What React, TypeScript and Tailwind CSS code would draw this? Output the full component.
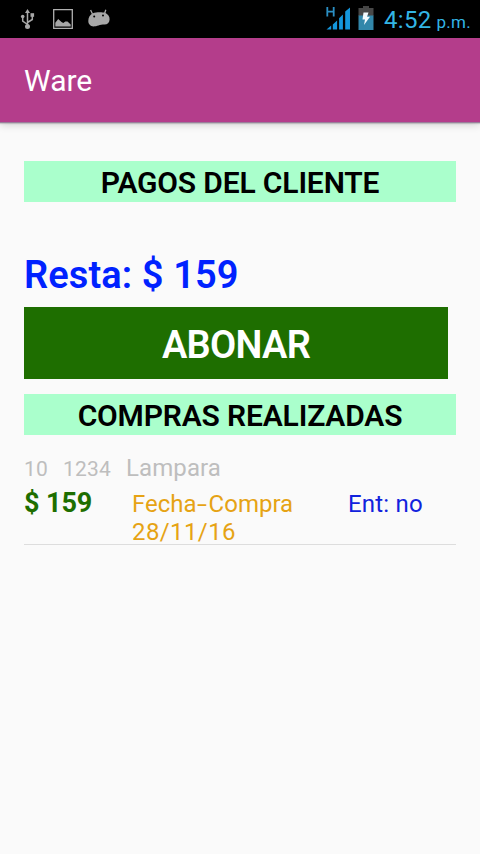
import type { ReactNode } from 'react';

const purchases = [
  { qty: '10', code: '1234', name: 'Lampara', price: '$ 159', date: '28/11/16', delivered: 'no' },
];

const UsbIcon = () => (
  <svg width="16" height="22" viewBox="0 0 16 22" fill="none" stroke="#a8a8a8" strokeWidth="1.5">
    <path d="M7.5 3v15M7.5 15.5 2.7 12V8M7.5 13.5l4.8-3V6.5" />
    <path d="M7.5 0 10 4H5z" fill="#a8a8a8" stroke="none" />
    <circle cx="7.5" cy="17.5" r="2.5" fill="#a8a8a8" stroke="none" />
    <circle cx="2.7" cy="7.5" r="1.8" fill="#a8a8a8" stroke="none" />
    <path d="M10.5 4.2h3.6v3.6h-3.6z" fill="#a8a8a8" stroke="none" />
  </svg>
);

const PictureIcon = () => (
  <svg width="20" height="20" viewBox="0 0 20 20" fill="none">
    <path d="M.7.7h18.6v18.6H.7z" stroke="#b0b0b0" strokeWidth="1.3" />
    <path d="M2.3 17.5v-3.8L5.2 10l3.3 3 1.8 1 2-1.5h2.2l3.2 3v2z" fill="#a8a8a8" />
  </svg>
);

const DroidIcon = () => (
  <svg width="22" height="18" viewBox="0 0 22 18">
    <path d="M4.5 5 2.6 1M16.6 4.5 17.8.8" stroke="#a8a8a8" strokeWidth="1.3" />
    <path
      d="M5 4.2C8 3 14 3 17 3.8c3 1.200 4.800 3.700 4.600 6.700-.2 3.200-2.200 5-5 5.100-2.600.1-4.300.4-6.100.9-2 .5-3 .9-5 .9C2.500 17.300.3 15.200.3 12 .3 8.500 2 5.500 5 4.200z"
      fill="#a8a8a8"
    />
    <circle cx="6.2" cy="7.500" r="1" fill="#000" />
    <circle cx="15" cy="6.500" r="1" fill="#000" />
  </svg>
);

const SignalIcon = () => (
  <svg width="26" height="24" viewBox="0 0 26 24">
    <path d="M1.300 1v9.500M7.700 1v9.500M1.300 5.600h6.400" stroke="#2b8fc4" strokeWidth="1.800" />
    <path
      d="M.5 23.500 5.200 19.500v4zM6.800 18.500l4.300-4v9H6.800zM13.100 12.200l3.800-3.700v15h-3.800zM19.200 5.500l4.800-4v22h-4.800z"
      fill="#1496dc"
    />
  </svg>
);

const BatteryIcon = () => (
  <svg width="16" height="24" viewBox="0 0 16 24">
    <path d="M5 0h6v2H5z" fill="#454545" />
    <path d="M.5 2h15v8H.5z" fill="#484848" />
    <path d="M.5 9.500h15V24H.5z" fill="#3287aa" />
    <path d="M5.500 6.500h5l-1.500 4.200h3L6 19l1-5.500H4.500z" fill="#f4fbff" />
  </svg>
);

const StatusBar = () => (
  <div className="flex h-[38px] items-start bg-black text-[#33b5e5]">
    <div className="flex flex-1 items-start pl-5 pt-[9px]">
      <UsbIcon />
      <div className="ml-[17px]">
        <PictureIcon />
      </div>
      <div className="ml-[15px]">
        <DroidIcon />
      </div>
    </div>
    <div className="flex items-start pt-1.5">
      <SignalIcon />
      <div className="ml-1.5">
        <BatteryIcon />
      </div>
    </div>
    <div className="ml-2.5 flex w-24 items-baseline whitespace-nowrap leading-[41px]">
      <span className="text-[24px] tracking-[0.3px]">4:52</span>
      <span className="ml-[5px] text-[17px] tracking-[0.3px]">p.m.</span>
    </div>
  </div>
);

const SectionTitle = ({ children }: { children: ReactNode }) => (
  <h2 className="h-[41px] bg-[#aaffcc] pt-px text-center text-[30px] font-semibold leading-[42px] tracking-[-0.15px] text-black">
    {children}
  </h2>
);

const App = () => {
  return (
    <div className="min-h-[854px] w-[480px] overflow-hidden bg-[#fafafa] font-['Roboto',sans-serif]">
      <StatusBar />
      <header className="flex h-[84px] items-center bg-[#b43d8b] px-6 pt-px shadow-[0_1px_0_#9a7d9b,0_2px_1px_rgba(0,0,0,0.15),0_3px_8px_rgba(0,0,0,0.16)]">
        <h1 className="text-[30px] leading-[36px] text-white">Ware</h1>
      </header>

      <main className="px-6 pt-[39px]">
        <SectionTitle>PAGOS DEL CLIENTE</SectionTitle>
        <p className="mt-12 text-[38px] font-semibold leading-[50px] tracking-[0.1px] text-[#0022ff]">Resta: $ 159</p>
        <button className="mt-[7px] block h-[72px] w-[424px] bg-[#1e6e00] pt-0.5 text-center text-[38px] font-semibold leading-[72px] tracking-[-0.7px] text-white">
          ABONAR
        </button>
        <div className="mt-[15px]">
          <SectionTitle>COMPRAS REALIZADAS</SectionTitle>
        </div>

        <ul className="pt-[18px]">
          {purchases.map(item => (
            <li key={item.code} className="border-b border-[#dddddd]">
              <div className="flex h-9 items-baseline text-[#bebebe]">
                <span className="w-[39px] text-[21px] leading-[30px] tracking-[0.2px]">{item.qty}</span>
                <span className="w-[63px] text-[21px] leading-[30px] tracking-[0.2px]">{item.code}</span>
                <span className="text-[24px] leading-[30px] tracking-[0.1px]">{item.name}</span>
              </div>
              <div className="flex h-[55px] items-baseline text-[24px] leading-[28px]">
                <span className="w-[108px] text-[27px] font-bold tracking-[-0.1px] text-[#1e6e00]">{item.price}</span>
                <span className="w-[216px] text-[#e6a314]">
                  Fecha
                  <span className="inline-block w-3 origin-left scale-x-150">-</span>
                  Compra
                  <br />
                  <span className="tracking-[0.4px]">{item.date}</span>
                </span>
                <span className="tracking-[0.2px] text-[#1122dd]">Ent: {item.delivered}</span>
              </div>
            </li>
          ))}
        </ul>
      </main>
    </div>
  );
};

export default App;
